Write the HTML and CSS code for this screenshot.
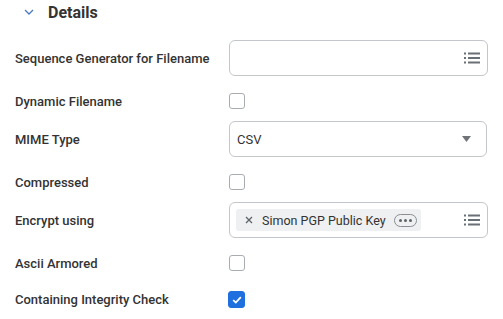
FILE: index.html
```html
<!DOCTYPE html>
<html lang="en">
<head>
    <meta charset="UTF-8" />
    <title>Details</title>
    <link rel="stylesheet" href="styles.css">
</head>
<body>
<div class="panel">
    <div class="section-head">
        <svg class="chevron" width="10" height="6" viewBox="0 0 10 6">
            <path d="M1 1 L5 5 L9 1" fill="none" stroke="#4a78c2" stroke-width="1.3" />
        </svg>
        <span class="section-title">Details</span>
    </div>

    <div class="fields">
        <div class="row">
            <div class="label">Sequence Generator for Filename</div>
            <div class="box">
                <span class="box-value"></span>
                <!-- list prompt icon -->
                <svg class="list-icon" width="16" height="12" viewBox="0 0 16 12">
                    <rect x="0" y="0.5" width="2" height="2" fill="#6b6f76" />
                    <rect x="4" y="0.5" width="12" height="2" fill="#6b6f76" />
                    <rect x="0" y="5" width="2" height="2" fill="#6b6f76" />
                    <rect x="4" y="5" width="12" height="2" fill="#6b6f76" />
                    <rect x="0" y="9.5" width="2" height="2" fill="#6b6f76" />
                    <rect x="4" y="9.5" width="12" height="2" fill="#6b6f76" />
                </svg>
            </div>
        </div>

        <div class="row check-row">
            <div class="label">Dynamic Filename</div>
            <span class="checkbox"></span>
        </div>

        <div class="row">
            <div class="label">MIME Type</div>
            <div class="box select">
                <span class="box-value">CSV</span>
                <svg class="caret" width="9" height="6" viewBox="0 0 9 6">
                    <path d="M0 0 H9 L4.5 6 Z" fill="#707378" />
                </svg>
            </div>
        </div>

        <div class="row check-row">
            <div class="label">Compressed</div>
            <span class="checkbox"></span>
        </div>

        <div class="row">
            <div class="label">Encrypt using</div>
            <div class="box">
                <span class="chip">
                    <svg class="chip-x" width="8" height="8" viewBox="0 0 8 8">
                        <path d="M1 1 L7 7 M7 1 L1 7" stroke="#5f6368" stroke-width="1.3" />
                    </svg>
                    <span class="chip-text">Simon PGP Public Key</span>
                    <span class="chip-more"><i></i><i></i><i></i></span>
                </span>
                <svg class="list-icon" width="16" height="12" viewBox="0 0 16 12">
                    <rect x="0" y="0.5" width="2" height="2" fill="#6b6f76" />
                    <rect x="4" y="0.5" width="12" height="2" fill="#6b6f76" />
                    <rect x="0" y="5" width="2" height="2" fill="#6b6f76" />
                    <rect x="4" y="5" width="12" height="2" fill="#6b6f76" />
                    <rect x="0" y="9.5" width="2" height="2" fill="#6b6f76" />
                    <rect x="4" y="9.5" width="12" height="2" fill="#6b6f76" />
                </svg>
            </div>
        </div>

        <div class="row check-row">
            <div class="label">Ascii Armored</div>
            <span class="checkbox"></span>
        </div>

        <div class="row check-row">
            <div class="label">Containing Integrity Check</div>
            <span class="checkbox checked">
                <svg width="10" height="8" viewBox="0 0 10 8">
                    <path d="M1.2 4.2 L3.8 6.6 L8.8 1.2" fill="none" stroke="#fff" stroke-width="1.8" />
                </svg>
            </span>
        </div>
    </div>
</div>
</body>
</html>
```

FILE: styles.css
```css
* {
    box-sizing: border-box;
}

body {
    margin: 0;
    font-family: Roboto, 'Noto Sans', Arial, sans-serif;
    color: #333;
    background: #fff;
}

.panel {
    padding: 0 15px 0 15px;
}

.section-head {
    display: flex;
    align-items: center;
    height: 24px;
    margin-bottom: 16px;
}

.chevron {
    margin-left: 9px;
    margin-right: 14px;
}

.section-title {
    font-size: 16px;
    font-weight: 700;
    color: #333;
}

.fields {
    display: flex;
    flex-direction: column;
    gap: 9px;
}

.row {
    display: flex;
    align-items: center;
}

.check-row {
    padding: 8px 0 3px;
}

.label {
    width: 214px;
    flex: none;
    font-size: 13px;
    font-weight: 500;
    color: #333;
}

.box {
    flex: 1;
    height: 36px;
    border: 1px solid #c3c6cb;
    border-radius: 6px;
    display: flex;
    align-items: center;
    padding: 0 7px 0 6px;
}

.box-value {
    flex: 1;
    font-size: 13px;
    color: #333;
    padding-left: 1px;
}

.select {
    margin-right: 1px;
    padding-right: 15px;
}

.list-icon {
    margin-left: auto;
}

.caret {
    flex: none;
}

.chip {
    display: flex;
    align-items: center;
    height: 22px;
    background: #eef0f2;
    border-radius: 3px;
    padding: 0 4px 0 9px;
}

.chip-x {
    margin-right: 9px;
}

.chip-text {
    font-size: 12.5px;
    color: #333;
}

.chip-more {
    display: flex;
    align-items: center;
    justify-content: center;
    gap: 2px;
    width: 23px;
    height: 13px;
    margin-left: 8px;
    border: 1px solid #8a8d92;
    border-radius: 7px;
}

.chip-more i {
    width: 3px;
    height: 3px;
    border-radius: 50%;
    background: #5f6368;
}

.checkbox {
    width: 16px;
    height: 16px;
    border: 1px solid #a9adb3;
    border-radius: 3px;
    display: flex;
    align-items: center;
    justify-content: center;
}

.checkbox.checked {
    width: 17px;
    height: 17px;
    margin-left: -1px;
    background: #1f6fde;
    border-color: #1f6fde;
}
```
